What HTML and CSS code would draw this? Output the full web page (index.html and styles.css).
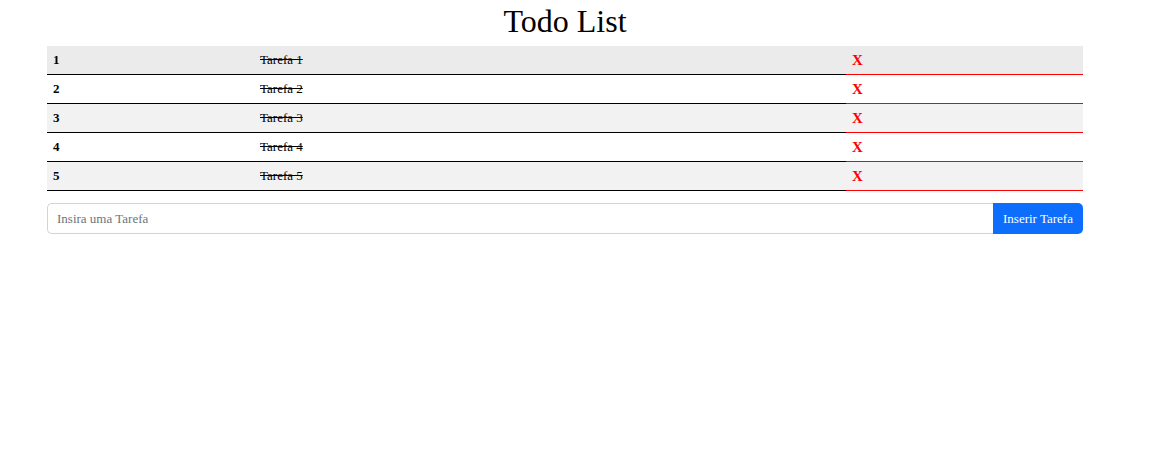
FILE: index.html
```html
<!DOCTYPE html>
<html>
<head>
<meta charset="utf-8">
<link rel="stylesheet" href="styles.css">
</head>
<body>
<main class="app">
  <h1 class="title">Todo List</h1>
  <table class="todos">
    <colgroup><col class="c-id"><col class="c-task"><col class="c-del"></colgroup>
    <tbody>
      <tr class="row first"><td class="id">1</td><td class="task">Tarefa 1</td><td class="del">X</td></tr>
      <tr class="row"><td class="id">2</td><td class="task">Tarefa 2</td><td class="del">X</td></tr>
      <tr class="row"><td class="id">3</td><td class="task">Tarefa 3</td><td class="del">X</td></tr>
      <tr class="row"><td class="id">4</td><td class="task">Tarefa 4</td><td class="del">X</td></tr>
      <tr class="row"><td class="id">5</td><td class="task">Tarefa 5</td><td class="del">X</td></tr>
    </tbody>
  </table>
  <form class="add">
    <input class="add-input" type="text" placeholder="Insira uma Tarefa">
    <button class="add-btn" type="button">Inserir Tarefa</button>
  </form>
</main>
</body>
</html>
```
FILE: styles.css
```css
html, body { margin: 0; padding: 0; background: #fff; }
body { font-family: "Liberation Serif", "Times New Roman", serif; color: #000; }
.app { width: 1036px; margin-left: 47px; }
.title {
  margin: 0;
  height: 46px;
  font-size: 32px;
  font-weight: normal;
  line-height: 42px;
  text-align: center;
}
.todos { width: 100%; border-collapse: separate; border-spacing: 0; table-layout: fixed; font-size: 13px; }
.c-id { width: 207px; }
.c-task { width: 592px; }
.c-del { width: 237px; }
.todos td { height: 28px; padding: 0 6px; border-bottom: 1px solid #000; vertical-align: middle; }
.todos td.del { border-bottom-color: #f00; }
.row:nth-child(odd) td { background: #f2f2f2; }
.row.first td { background: #ebebeb; }
.id { font-weight: bold; }
.task { text-decoration: line-through; }
.del { color: #f00; font-weight: bold; font-size: 15px; }
.add { display: flex; margin-top: 12px; height: 31px; }
.add-input {
  flex: 1;
  box-sizing: border-box;
  height: 31px;
  margin: 0;
  padding: 0 9px;
  border: 1px solid #ced4da;
  border-right: none;
  border-radius: 5px 0 0 5px;
  font-family: inherit;
  font-size: 13px;
  outline: none;
}
.add-input::placeholder { color: #6c757d; }
.add-btn {
  width: 90px;
  height: 31px;
  margin: 0;
  padding: 0;
  border: none;
  border-radius: 0 5px 5px 0;
  background: #0d6efd;
  color: #fff;
  font-family: inherit;
  font-size: 13px;
}
```
